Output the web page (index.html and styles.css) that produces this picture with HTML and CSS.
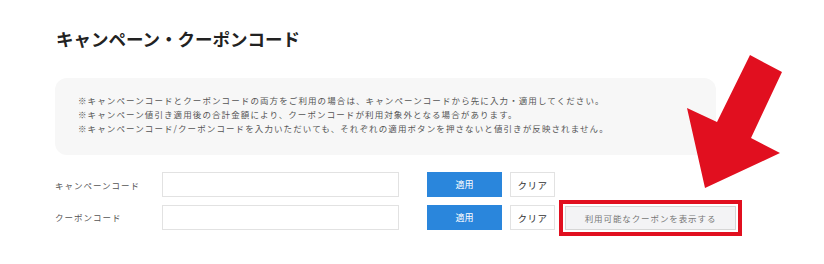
FILE: index.html
```html
<!DOCTYPE html>
<html lang="ja">
<head>
  <meta charset="utf-8">
  <link rel="stylesheet" href="styles.css">
</head>
<body>
  <div class="page">
    <h2 class="title">キャンペーン・クーポンコード</h2>
    <div class="notice">
      <p>※キャンペーンコードとクーポンコードの両方をご利用の場合は、キャンペーンコードから先に入力・適用してください。</p>
      <p>※キャンペーン値引き適用後の合計金額により、クーポンコードが利用対象外となる場合があります。</p>
      <p>※キャンペーンコード/クーポンコードを入力いただいても、それぞれの適用ボタンを押さないと値引きが反映されません。</p>
    </div>
    <div class="form">
      <div class="row">
        <label class="label">キャンペーンコード</label>
        <input class="field" type="text">
        <button class="btn apply">適用</button>
        <button class="btn clear">クリア</button>
      </div>
      <div class="row row-last">
        <label class="label">クーポンコード</label>
        <input class="field" type="text">
        <button class="btn apply">適用</button>
        <button class="btn clear">クリア</button>
        <span class="highlight"><button class="btn show">利用可能なクーポンを表示する</button></span>
      </div>
    </div>
  </div>
  <svg class="arrow" width="824" height="264" viewBox="0 0 824 264">
    <polygon points="750,55 782,72 751,138 780,153 705,188 687,108 717,122" fill="#e10f1f"/>
  </svg>
</body>
</html>
```

FILE: styles.css
```css
html, body { height: 100%; }
body { margin: 0; background: #fff; font-family: "Noto Sans CJK JP", "Noto Sans", sans-serif; color: #333; }
.page { padding: 26px 0 30px 55px; }
.title { margin: 0 0 0 1px; font-size: 17.5px; font-weight: bold; color: #222; line-height: 26px; }
.notice { margin-top: 26px; width: 638px; height: 62px; padding: 15px 0 0 23px; background: #f7f7f7; border-radius: 12px; }
.notice p { margin: 0; font-size: 8.5px; line-height: 14px; letter-spacing: 1.1px; color: #555; }
.form { margin-top: 17px; display: flex; flex-direction: column; gap: 8px; }
.row { display: flex; align-items: center; height: 25px; }
.row-last { align-items: flex-start; height: auto; }
.row-last .label { line-height: 25px; }
.label { width: 107px; font-size: 8.5px; letter-spacing: 1px; color: #555; }
.field { box-sizing: border-box; width: 237px; height: 25px; border: 1px solid #e2e2e2; margin: 0 28px 0 0; padding: 0; }
.btn { box-sizing: border-box; height: 25px; padding: 0; font-family: inherit; cursor: pointer; }
.apply { width: 75px; background: #2a86dc; border: none; color: #fff; font-size: 9px; margin-right: 8px; }
.clear { width: 45px; background: #fff; border: 1px solid #e2e2e2; color: #333; font-size: 9.5px; letter-spacing: 0.5px; margin-right: 4px; }
.highlight { display: flex; flex-shrink: 0; padding: 2px; border: 4px solid #e10f1f; margin-top: -5px; }
.show { display: block; width: 171px; height: 24px; background: #f3f3f5; border: 1px solid #d6d6d6; color: #777; font-size: 8.5px; letter-spacing: 0.9px; }
.arrow { position: absolute; left: 0; top: 0; }
```
